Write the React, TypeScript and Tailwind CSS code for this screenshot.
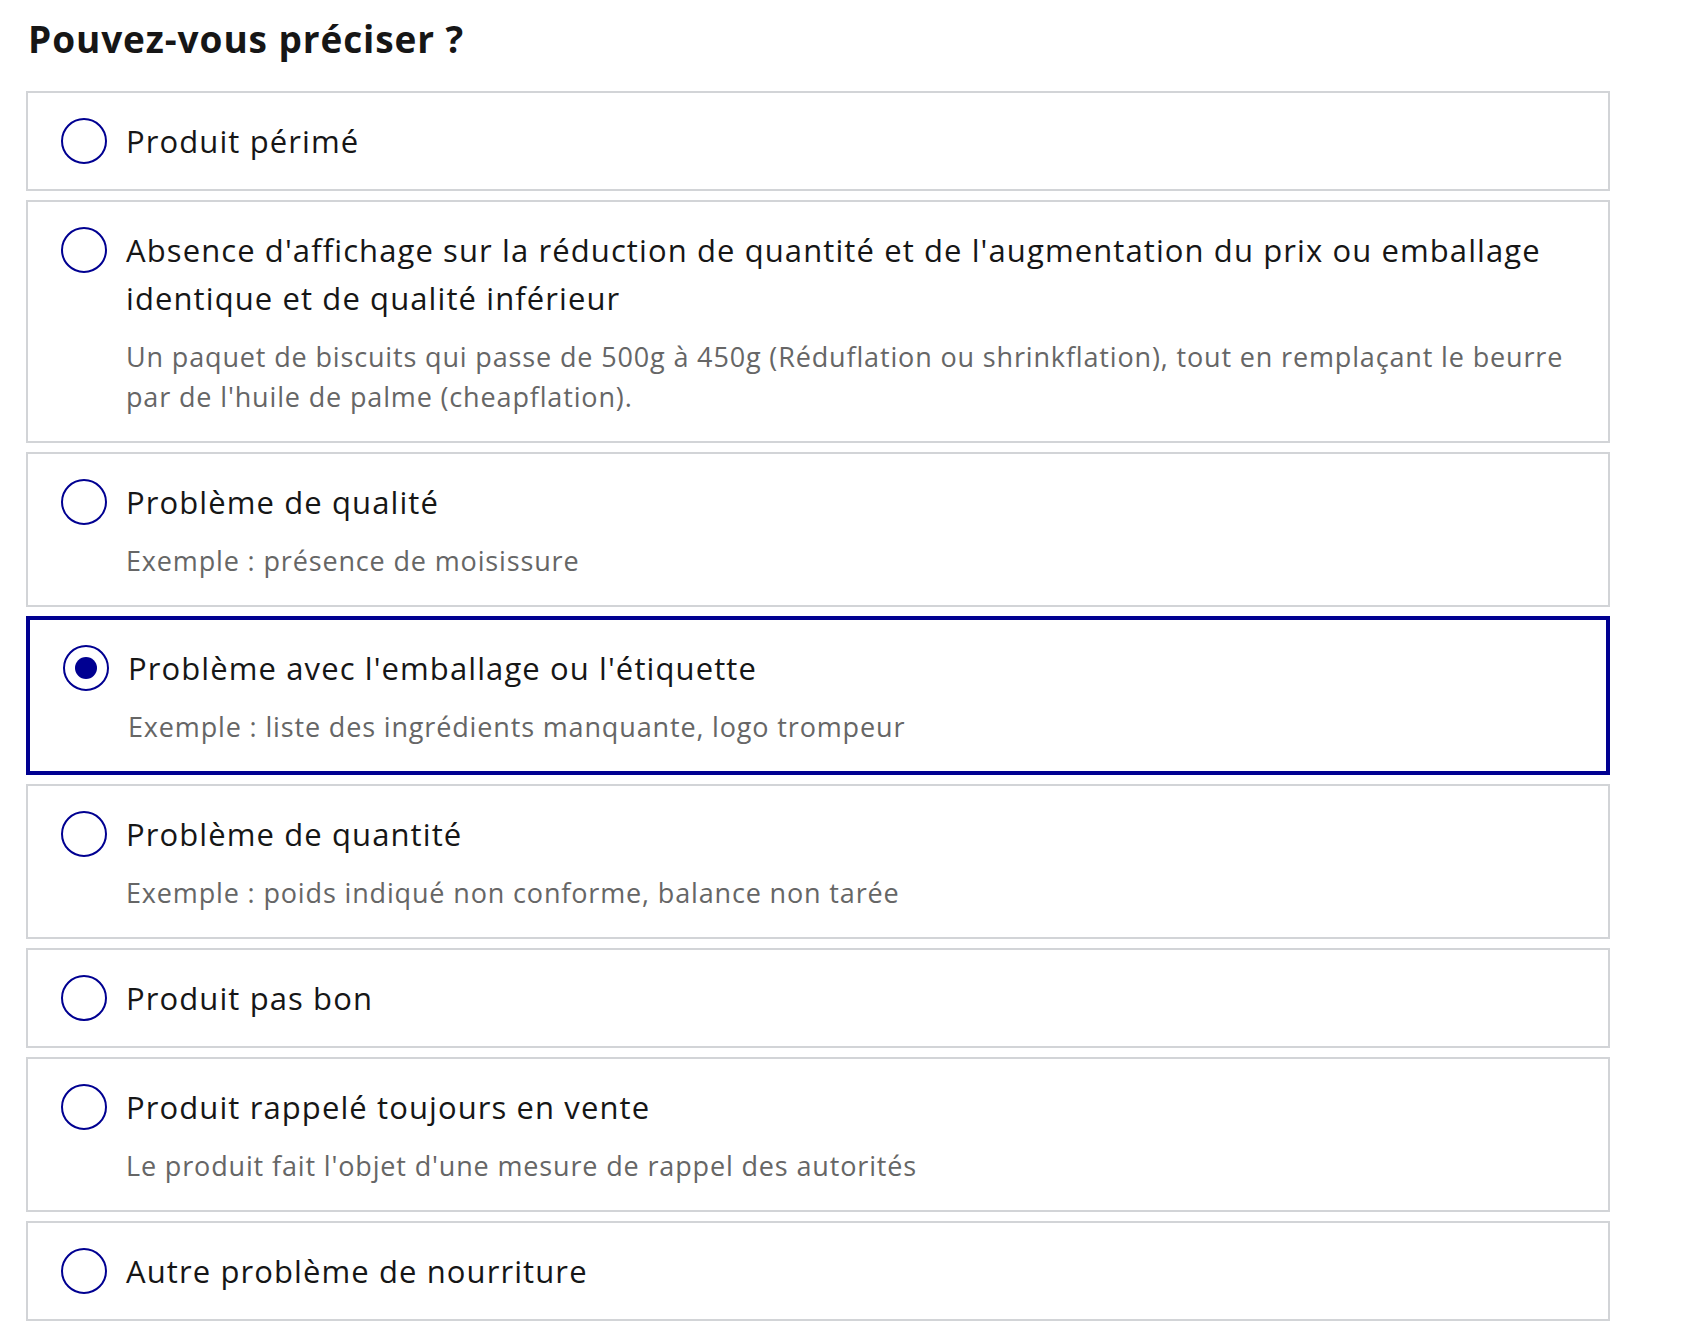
import { useState } from 'react';

type Option = {
  label: string;
  hint?: string;
};

const options: Option[] = [
  { label: 'Produit périmé' },
  {
    label:
      "Absence d'affichage sur la réduction de quantité et de l'augmentation du prix ou emballage identique et de qualité inférieur",
    hint: "Un paquet de biscuits qui passe de 500g à 450g (Réduflation ou shrinkflation), tout en remplaçant le beurre par de l'huile de palme (cheapflation).",
  },
  { label: 'Problème de qualité', hint: 'Exemple : présence de moisissure' },
  {
    label: "Problème avec l'emballage ou l'étiquette",
    hint: 'Exemple : liste des ingrédients manquante, logo trompeur',
  },
  { label: 'Problème de quantité', hint: 'Exemple : poids indiqué non conforme, balance non tarée' },
  { label: 'Produit pas bon' },
  { label: 'Produit rappelé toujours en vente', hint: "Le produit fait l'objet d'une mesure de rappel des autorités" },
  { label: 'Autre problème de nourriture' },
];

function RadioCircle({ checked }: { checked: boolean }) {
  return (
    <span className="flex h-[48px] shrink-0 items-center">
      <span className="flex h-[46px] w-[46px] items-center justify-center rounded-full border-2 border-[#000091]">
        {checked && <span className="h-[22px] w-[22px] rounded-full bg-[#000091]" />}
      </span>
    </span>
  );
}

export default function App() {
  const [selected, setSelected] = useState(3);

  return (
    <div className="min-h-screen bg-white px-[26px] pt-[17px] font-['Open_Sans',sans-serif] text-[#161616]">
      <h2 className="mb-[30px] pl-[2px] text-[37px] font-bold leading-[44px] tracking-[0.9px]">
        Pouvez-vous préciser ?
      </h2>

      <div className="flex w-[1584px] flex-col gap-[9px]">
        {options.map((opt, i) => {
          const checked = selected === i;
          return (
            <label
              key={i}
              onClick={() => setSelected(i)}
              className={`flex cursor-pointer gap-[19px] bg-white py-[24px] pl-[33px] pr-[20px] ${
                checked ? 'border-4 border-[#000091]' : 'border-2 border-[#d2d4d7]'
              }`}
            >
              <RadioCircle checked={checked} />
              <div className="flex flex-1 flex-col">
                <span className="text-[31px] leading-[48px] tracking-[1.1px]">{opt.label}</span>
                {opt.hint && (
                  <span className="mt-[15px] text-[27px] leading-[40px] tracking-[0.85px] text-[#666666]">
                    {opt.hint}
                  </span>
                )}
              </div>
            </label>
          );
        })}
      </div>
    </div>
  );
}
